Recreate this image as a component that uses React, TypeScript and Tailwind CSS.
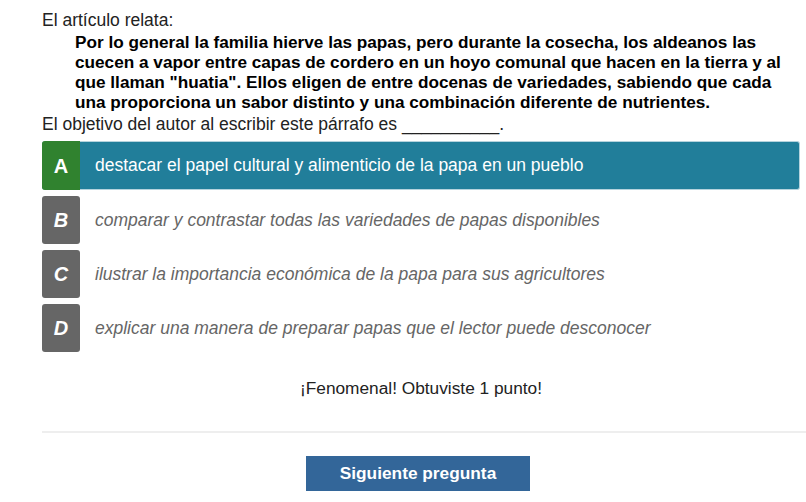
import React from "react";

type Option = {
  letter: string;
  text: string;
};

// ===== DATA =====
const OPTIONS: Option[] = [
  { letter: "A", text: "destacar el papel cultural y alimenticio de la papa en un pueblo" },
  { letter: "B", text: "comparar y contrastar todas las variedades de papas disponibles" },
  { letter: "C", text: "ilustrar la importancia económica de la papa para sus agricultores" },
  { letter: "D", text: "explicar una manera de preparar papas que el lector puede desconocer" },
];

const PASSAGE = [
  "Por lo general la familia hierve las papas, pero durante la cosecha, los aldeanos las",
  "cuecen a vapor entre capas de cordero en un hoyo comunal que hacen en la tierra y al",
  'que llaman "huatia". Ellos eligen de entre docenas de variedades, sabiendo que cada',
  "una proporciona un sabor distinto y una combinación diferente de nutrientes.",
];

const SELECTED = "A";

// ===== COMPONENT =====
const App: React.FC = () => {
  return (
    <div
      className="w-[806px] h-[502px] bg-white overflow-hidden pl-[42px] pt-[10px] text-[#222]"
      style={{ fontFamily: '"Liberation Sans", Arial, sans-serif' }}
    >
      {/* Question */}
      <div className="text-[17.5px] leading-[20px]">El artículo relata:</div>
      <p className="font-bold text-[17.2px] leading-[20px] pl-[33px] mt-[2px] text-black whitespace-nowrap">
        {PASSAGE.map((line, i) => (
          <span key={i} className="block">
            {line}
          </span>
        ))}
      </p>
      <div className="text-[17.5px] leading-[20px] mt-[2px]">
        El objetivo del autor al escribir este párrafo es __________.
      </div>

      {/* Options */}
      <div className="mt-[7px] mr-[6px] flex flex-col gap-[6px]">
        {OPTIONS.map((o) => {
          const selected = o.letter === SELECTED;
          return (
            <div
              key={o.letter}
              className={
                selected
                  ? "h-[49px] flex items-stretch bg-[#217e9a] border border-[#b5d3dd] border-l-0 rounded-[3px]"
                  : "h-[48px] flex items-stretch"
              }
            >
              <div
                className={
                  selected
                    ? "w-[38px] -my-px flex items-center justify-center bg-[#30822f] rounded-l-[3px] text-white font-bold text-[20px]"
                    : "w-[38px] flex items-center justify-center bg-[#666666] rounded-[3px] text-white font-bold italic text-[20px]"
                }
              >
                {o.letter}
              </div>
              <div
                className={
                  selected
                    ? "flex items-center pl-[15px] text-[17.5px] text-white"
                    : "flex items-center pl-[15px] text-[17.5px] italic text-[#666666]"
                }
              >
                {o.text}
              </div>
            </div>
          );
        })}
      </div>

      {/* Feedback */}
      <div className="mt-[26px] mr-[6px] text-center text-[17.3px] leading-[20px] text-[#222]">
        ¡Fenomenal! Obtuviste 1 punto!
      </div>

      <div className="mt-[33px] border-t-2 border-[#eeeeee]" />

      {/* Next */}
      <div className="mt-[23px] flex justify-center pr-[12px]">
        <button className="w-[224px] h-[35px] bg-[#336699] text-white font-bold text-[17.3px]">
          Siguiente pregunta
        </button>
      </div>
    </div>
  );
};

export default App;
